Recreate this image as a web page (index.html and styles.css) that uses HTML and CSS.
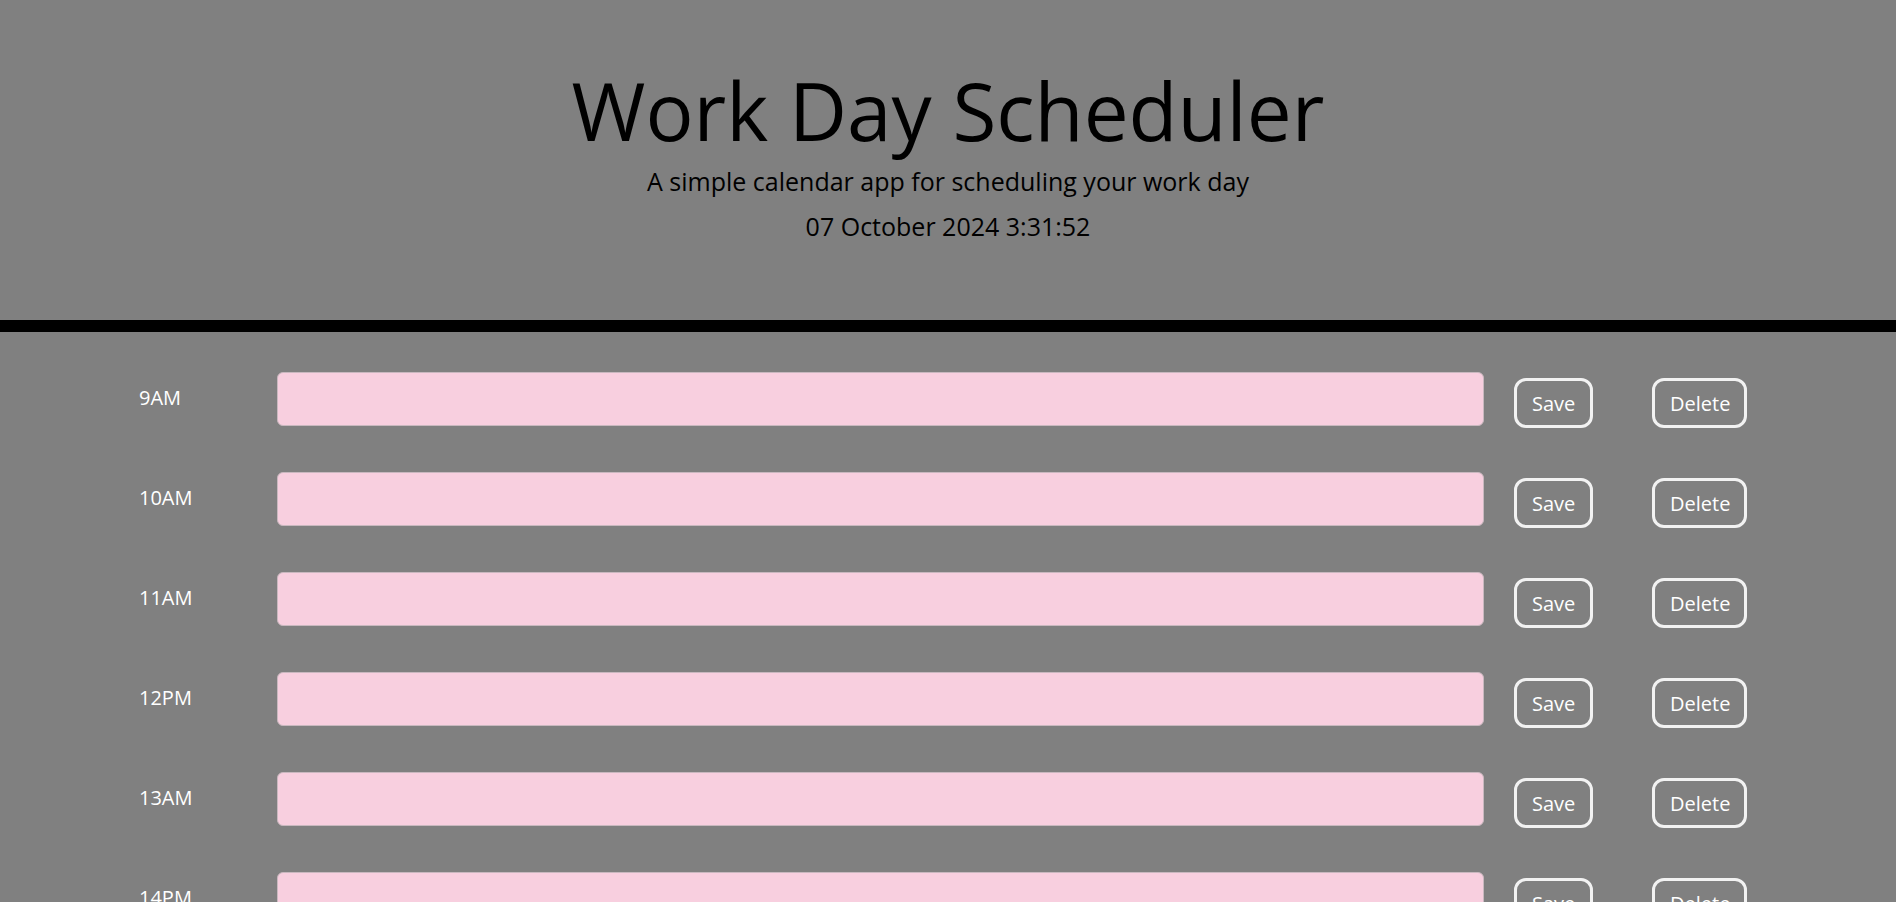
FILE: index.html
```html
<!DOCTYPE html>
<html lang="en">
<head>
<meta charset="utf-8">
<title>Work Day Scheduler</title>
<link rel="stylesheet" href="styles.css">
</head>
<body>
<header class="jumbotron">
  <h1 class="title">Work Day Scheduler</h1>
  <p class="lead">A simple calendar app for scheduling your work day</p>
  <p class="current-day">07 October 2024 3:31:52</p>
</header>
<main class="schedule">
  <div class="time-block"><div class="hour">9AM</div><textarea class="description"></textarea><button class="btn save">Save</button><button class="btn delete">Delete</button></div>
  <div class="time-block"><div class="hour">10AM</div><textarea class="description"></textarea><button class="btn save">Save</button><button class="btn delete">Delete</button></div>
  <div class="time-block"><div class="hour">11AM</div><textarea class="description"></textarea><button class="btn save">Save</button><button class="btn delete">Delete</button></div>
  <div class="time-block"><div class="hour">12PM</div><textarea class="description"></textarea><button class="btn save">Save</button><button class="btn delete">Delete</button></div>
  <div class="time-block"><div class="hour">13AM</div><textarea class="description"></textarea><button class="btn save">Save</button><button class="btn delete">Delete</button></div>
  <div class="time-block"><div class="hour">14PM</div><textarea class="description"></textarea><button class="btn save">Save</button><button class="btn delete">Delete</button></div>
  <div class="time-block"><div class="hour">15PM</div><textarea class="description"></textarea><button class="btn save">Save</button><button class="btn delete">Delete</button></div>
  <div class="time-block"><div class="hour">16PM</div><textarea class="description"></textarea><button class="btn save">Save</button><button class="btn delete">Delete</button></div>
  <div class="time-block"><div class="hour">17PM</div><textarea class="description"></textarea><button class="btn save">Save</button><button class="btn delete">Delete</button></div>
</main>
</body>
</html>
```

FILE: styles.css
```css
html, body {
  margin: 0;
  padding: 0;
  background: #808080;
  font-family: "Open Sans", "Noto Sans", sans-serif;
}

.jumbotron {
  background: #808080;
  border-bottom: 12px solid #000;
  text-align: center;
  color: #000;
  padding: 62px 0 0;
  height: 332px;
  box-sizing: border-box;
}

.title {
  margin: 0;
  font-size: 80px;
  font-weight: 400;
  line-height: 96px;
}

.lead {
  margin: 5px 0 0;
  font-size: 25px;
  line-height: 37px;
  font-weight: 400;
}

.current-day {
  margin: 8px 0 0;
  font-size: 25px;
  line-height: 37px;
}

.schedule {
  padding: 40px 0 40px 139px;
  display: flex;
  flex-direction: column;
  gap: 46px;
}

.time-block {
  display: flex;
  align-items: flex-start;
  height: 54px;
}

.hour {
  width: 138px;
  flex: none;
  color: #fff;
  font-size: 20px;
  line-height: 28px;
  padding-top: 12px;
}

.description {
  flex: none;
  box-sizing: border-box;
  height: 54px;
  width: 1207px;
  background: #f8cfdf;
  border: 1px solid #c9b8bf;
  border-radius: 6px;
  resize: none;
  margin: 0;
}

.btn {
  flex: none;
  box-sizing: border-box;
  height: 50px;
  padding: 0 15px;
  background: transparent;
  border: 3px solid #f2f2f2;
  border-radius: 12px;
  color: #fff;
  font-family: "Open Sans", "Noto Sans", sans-serif;
  font-size: 20px;
  margin-top: 6px;
}

.save {
  margin-left: 30px;
  width: 79px;
}

.delete {
  margin-left: 59px;
  width: 95px;
}
```
